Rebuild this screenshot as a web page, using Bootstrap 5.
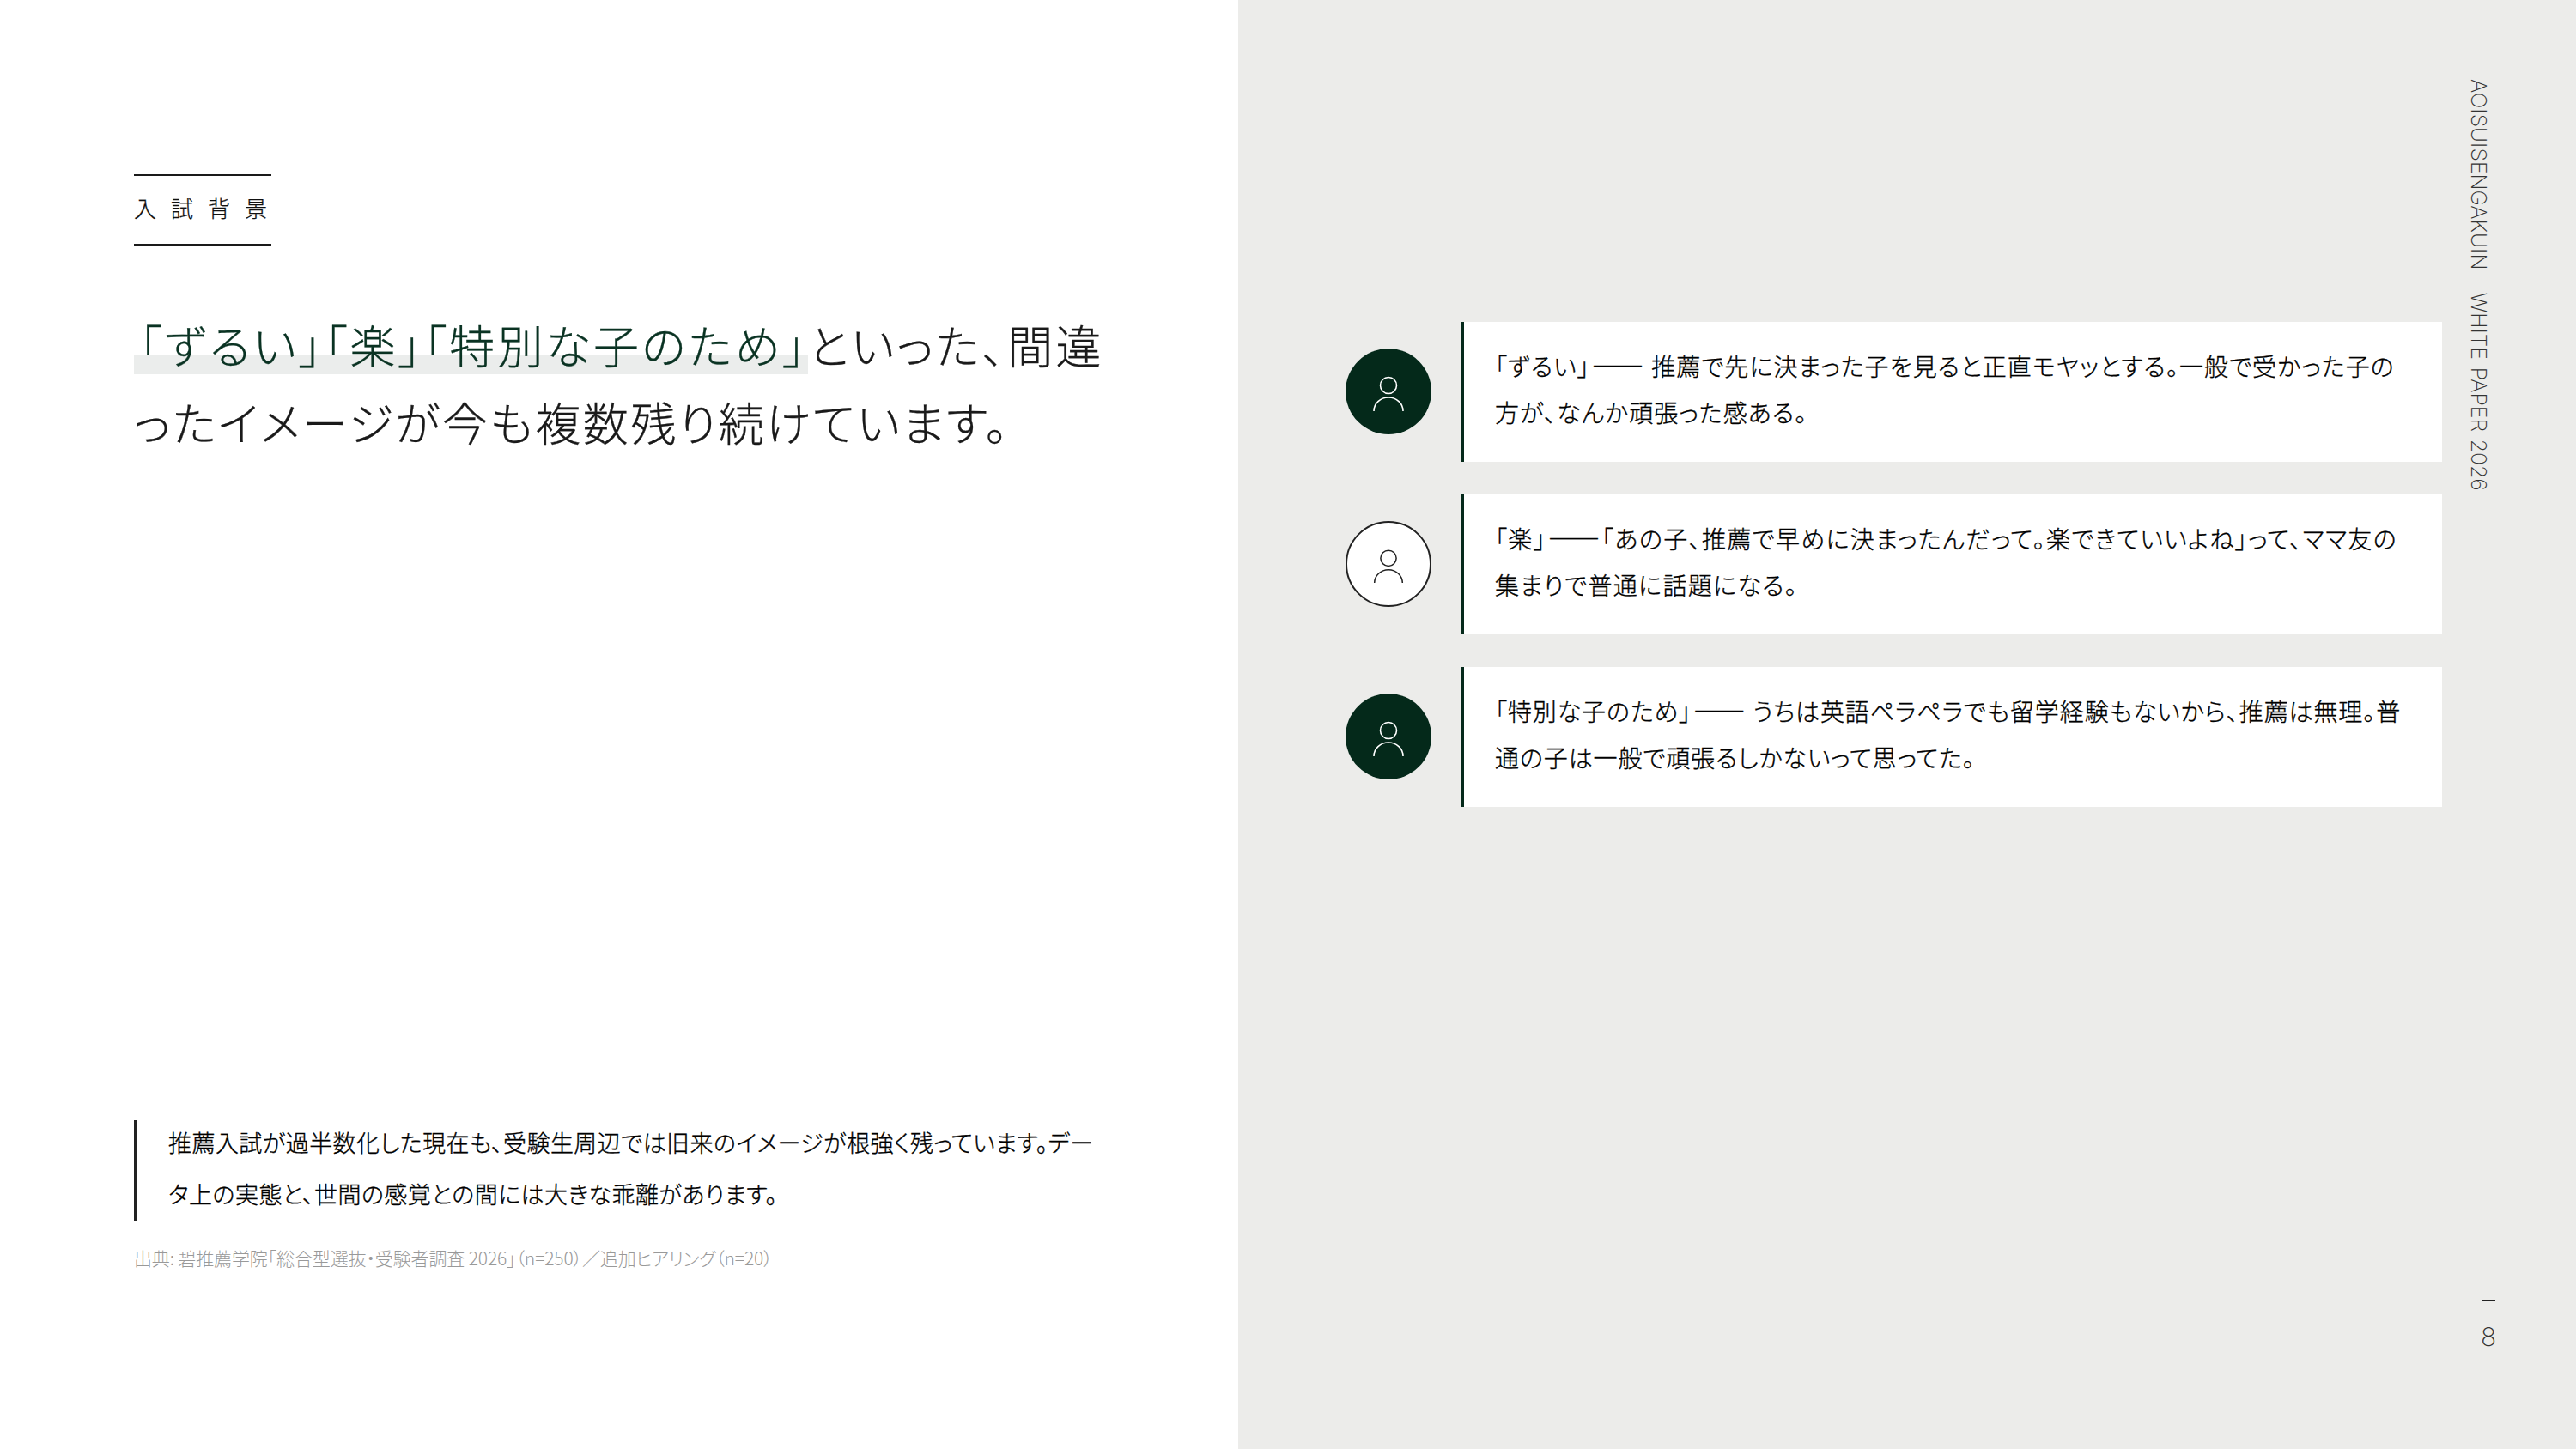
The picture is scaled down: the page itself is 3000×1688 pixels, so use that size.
<!DOCTYPE html>
<html lang="ja">
<head>
  <meta charset="UTF-8">
  <title>入試背景</title>
  <link href="https://cdn.jsdelivr.net/npm/bootstrap@5.3.0/dist/css/bootstrap.min.css" rel="stylesheet">
  <style>
    html, body { margin: 0; background: #fff; }
    .slide {
      width: 3000px; height: 1688px; overflow: hidden;
      font-family: "Noto Sans CJK JP", "Noto Sans", sans-serif;
      font-feature-settings: "palt"; color: #222;
    }
    .pane-left { width: 1442px; padding: 203px 156px 0; }
    .pane-right { width: 1558px; background: #ececea; padding: 375px 156px 0 125px; }
    .kicker {
      width: 160px; height: 83px; border-top: 2px solid #1a1a1a; border-bottom: 2px solid #1a1a1a; padding-bottom: 6px;
      font-size: 26px; letter-spacing: 17px; font-weight: 300; color: #111; -webkit-text-stroke: .25px currentColor; white-space: nowrap;
    }
    .headline { margin-top: 70px; font-size: 53px; line-height: 90px; font-weight: 300; letter-spacing: 2.6px; color: #1a1a1a; -webkit-text-stroke: .3px currentColor; white-space: nowrap; }
    .hl { color: #0a3323; padding-left: 6px; letter-spacing: 3.25px; background: linear-gradient(transparent 65.7%, #ebedec 65.7%, #ebedec 96.2%, transparent 96.2%); }
    .hl-tail { letter-spacing: 3.2px; }
    .note { display: flow-root; border-left: 3px solid #222; padding-left: 37px; margin-top: 769px; height: 117px; font-size: 27px; font-weight: 300; color: #000; -webkit-text-stroke: .35px currentColor; line-height: 60px; letter-spacing: .45px; white-space: nowrap; }
    .note-text { margin-top: -4px; }
    .source { margin-top: 28px; font-size: 21px; letter-spacing: -.13px; color: #999; white-space: nowrap; font-weight: 300; }
    .voice-list { gap: 38.5px; }
    .avatar { width: 100px; height: 100px; border-radius: 50%; flex: none; background: #04291a; color: #fff; }
    .avatar.outline { background: #fff; color: #222; border: 2px solid #222; }
    .avatar svg { width: 100%; height: 100%; display: block; }
    .voice { margin-left: 35px; flex: 1; height: 162.5px; background: #fff; border-left: 3px solid #04291a; padding: 0 36px 7px; font-size: 28px; font-weight: 300; color: #000; -webkit-text-stroke: .35px currentColor; line-height: 54px; letter-spacing: 1.1px; white-space: nowrap; }
    .voice-2 { letter-spacing: 1.35px; }
    .voice-3 { letter-spacing: .9px; }
    .dash { font-feature-settings: normal; letter-spacing: 0; font-size: 30px; margin: 0 2px; }
    .side-label {
      position: absolute; left: 2868px; top: 92px; writing-mode: vertical-rl;
      font-family: Inter, "Liberation Sans", sans-serif; font-weight: 200; font-size: 24.8px; word-spacing: 1.8px; color: #333; white-space: pre;
    }
    .page-no { position: absolute; left: 2878px; top: 1514px; width: 40px; font-family: Inter, sans-serif; font-weight: 200; font-size: 30px; color: #333; }
    .page-no::before { content: ""; display: block; width: 15px; height: 2px; background: #222; margin: 0 auto 19px; }
  </style>
</head>
<body>
<div class="slide d-flex position-relative">
  <div class="pane-left">
    <div class="kicker d-flex align-items-center">入試背景</div>
    <h1 class="headline"><span class="hl">「ずるい」「楽」「特別な子のため」</span><span class="hl-tail">といった、間違</span><br>ったイメージが今も複数残り続けています。</h1>
    <div class="note"><div class="note-text">推薦入試が過半数化した現在も、受験生周辺では旧来のイメージが根強く残っています。デー<br>タ上の実態と、世間の感覚との間には大きな乖離があります。</div></div>
    <p class="source mb-0">出典: 碧推薦学院「総合型選抜・受験者調査 2026」（n=250）／追加ヒアリング（n=20）</p>
  </div>
  <div class="pane-right">
    <div class="voice-list d-flex flex-column">
      <div class="d-flex align-items-center">
        <div class="avatar"><svg viewBox="0 0 100 100" fill="none" stroke="currentColor" stroke-width="1.6"><circle cx="50" cy="43" r="9.5"/><path d="M33 73A17 16 0 0 1 67 73"/></svg></div>
        <div class="voice d-flex align-items-center"><div>「ずるい」<span class="dash">——</span> 推薦で先に決まった子を見ると正直モヤッとする。一般で受かった子の<br>方が、なんか頑張った感ある。</div></div>
      </div>
      <div class="d-flex align-items-center">
        <div class="avatar outline"><svg viewBox="0 0 100 100" fill="none" stroke="currentColor" stroke-width="1.6"><circle cx="50" cy="43" r="9.5"/><path d="M33 73A17 16 0 0 1 67 73"/></svg></div>
        <div class="voice voice-2 d-flex align-items-center"><div>「楽」<span class="dash">——</span>「あの子、推薦で早めに決まったんだって。楽できていいよね」って、ママ友の<br>集まりで普通に話題になる。</div></div>
      </div>
      <div class="d-flex align-items-center">
        <div class="avatar"><svg viewBox="0 0 100 100" fill="none" stroke="currentColor" stroke-width="1.6"><circle cx="50" cy="43" r="9.5"/><path d="M33 73A17 16 0 0 1 67 73"/></svg></div>
        <div class="voice voice-3 d-flex align-items-center"><div>「特別な子のため」<span class="dash">——</span> うちは英語ペラペラでも留学経験もないから、推薦は無理。普<br>通の子は一般で頑張るしかないって思ってた。</div></div>
      </div>
    </div>
  </div>
  <div class="side-label">AOISUISENGAKUIN   WHITE PAPER 2026</div>
  <div class="page-no text-center">8</div>
</div>
</body>
</html>
